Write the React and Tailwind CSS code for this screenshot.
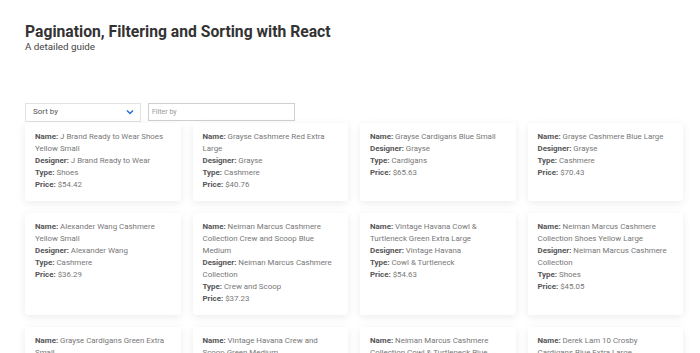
import React from 'react';

const products = [
    { name: 'J Brand Ready to Wear Shoes Yellow Small', designer: 'J Brand Ready to Wear', type: 'Shoes', price: '$54.42' },
    { name: 'Grayse Cashmere Red Extra Large', designer: 'Grayse', type: 'Cashmere', price: '$40.76' },
    { name: 'Grayse Cardigans Blue Small', designer: 'Grayse', type: 'Cardigans', price: '$65.63' },
    { name: 'Grayse Cashmere Blue Large', designer: 'Grayse', type: 'Cashmere', price: '$70.43' },
    { name: 'Alexander Wang Cashmere Yellow Small', designer: 'Alexander Wang', type: 'Cashmere', price: '$36.29' },
    { name: 'Neiman Marcus Cashmere Collection Crew and Scoop Blue Medium', designer: 'Neiman Marcus Cashmere Collection', type: 'Crew and Scoop', price: '$37.23' },
    { name: 'Vintage Havana Cowl & Turtleneck Green Extra Large', designer: 'Vintage Havana', type: 'Cowl & Turtleneck', price: '$54.63' },
    { name: 'Neiman Marcus Cashmere Collection Shoes Yellow Large', designer: 'Neiman Marcus Cashmere Collection', type: 'Shoes', price: '$45.05' },
    { name: 'Grayse Cardigans Green Extra Small', designer: 'Grayse', type: 'Cardigans', price: '$29.99' },
    { name: 'Vintage Havana Crew and Scoop Green Medium', designer: 'Vintage Havana', type: 'Crew and Scoop', price: '$48.10' },
    { name: 'Neiman Marcus Cashmere Collection Cowl & Turtleneck Blue Small', designer: 'Neiman Marcus Cashmere Collection', type: 'Cowl & Turtleneck', price: '$61.20' },
    { name: 'Derek Lam 10 Crosby Cardigans Blue Extra Large', designer: 'Derek Lam 10 Crosby', type: 'Cardigans', price: '$52.87' },
];

function Field({ label, value }) {
    return (
        <div>
            <span className="font-bold text-[#555]">{label}:</span> {value}
        </div>
    );
}

export default function App() {
    return (
        <div className="min-h-screen bg-white text-[#777] pl-[25px] pt-[22px]" style={{ fontFamily: 'Roboto, "Open Sans", sans-serif' }}>
            {/* Header */}
            <h1 className="text-[15.7px] font-bold leading-[19px] text-[#333]">Pagination, Filtering and Sorting with React</h1>
            <p className="text-[9.8px] leading-[12px] text-[#444]">A detailed guide</p>

            {/* Controls */}
            <div className="flex items-center gap-[7px] mt-[49px] h-[20px]">
                <div className="w-[116px] h-[19px] border border-[#e2e2e2] bg-white flex items-center justify-between pl-[7px] pr-[6px] text-[8px] text-[#555]">
                    <span>Sort by</span>
                    <svg width="8" height="6" viewBox="0 0 8 6" className="text-[#2a6fd6]">
                        <path d="M1 1.5 L4 4.5 L7 1.5" fill="none" stroke="currentColor" strokeWidth="1.5" />
                    </svg>
                </div>
                <input
                    placeholder="Filter by"
                    className="w-[147px] h-[18px] border border-[#cfcfcf] px-[3px] text-[7px] placeholder:text-[#999] outline-none"
                />
            </div>

            {/* Cards */}
            <div className="grid grid-cols-4 gap-x-[12px] gap-y-[12px] w-[658px] mt-[1px]">
                {products.map((p, i) => (
                    <div
                        key={i}
                        className="bg-white rounded-[3px] shadow-[0_2px_8px_rgba(0,0,0,0.08)] pl-[10px] pr-[13px] pt-[8px] pb-[10px] text-[7.9px] leading-[12px]"
                    >
                        <Field label="Name" value={p.name} />
                        <Field label="Designer" value={p.designer} />
                        <Field label="Type" value={p.type} />
                        <Field label="Price" value={p.price} />
                    </div>
                ))}
            </div>
        </div>
    );
}
